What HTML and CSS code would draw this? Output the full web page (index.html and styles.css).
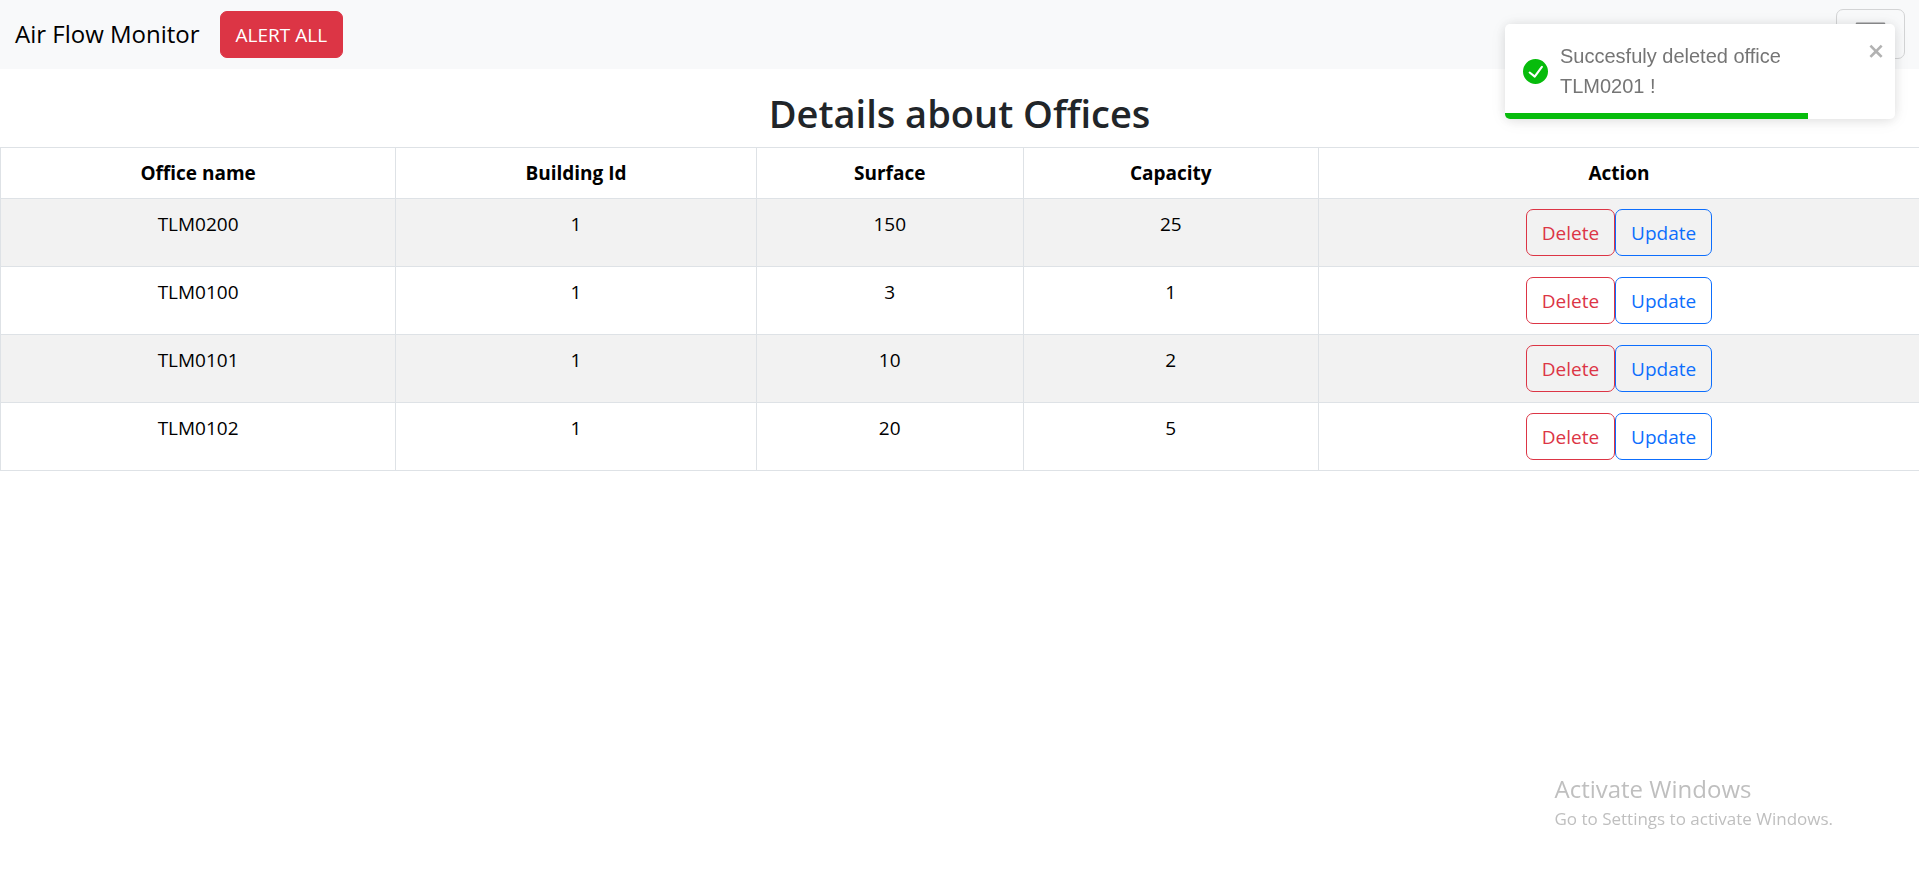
FILE: index.html
```html
<!DOCTYPE html>
<html lang="en">
<head>
<meta charset="utf-8">
<meta name="viewport" content="width=device-width, initial-scale=1">
<title>Air Flow Monitor</title>
<link rel="stylesheet" href="styles.css">
</head>
<body>
<nav class="navbar">
  <a class="brand" href="#">Air Flow Monitor</a>
  <button class="btn btn-danger" type="button">ALERT ALL</button>
  <button class="toggler" type="button" aria-label="Toggle navigation">
    <svg class="toggler-icon" viewBox="0 0 30 30" aria-hidden="true"><path d="M4 7h22M4 15h22M4 23h22"/></svg>
  </button>
</nav>
<main>
  <h2 class="title">Details about Offices</h2>
  <table class="table">
    <colgroup>
      <col class="col-name"><col class="col-building"><col class="col-surface"><col class="col-capacity"><col>
    </colgroup>
    <thead>
      <tr><th>Office name</th><th>Building Id</th><th>Surface</th><th>Capacity</th><th>Action</th></tr>
    </thead>
    <tbody>
      <tr><td>TLM0200</td><td>1</td><td>150</td><td>25</td><td><div class="actions"><button class="btn btn-outline-danger" type="button">Delete</button><button class="btn btn-outline-primary" type="button">Update</button></div></td></tr>
      <tr><td>TLM0100</td><td>1</td><td>3</td><td>1</td><td><div class="actions"><button class="btn btn-outline-danger" type="button">Delete</button><button class="btn btn-outline-primary" type="button">Update</button></div></td></tr>
      <tr><td>TLM0101</td><td>1</td><td>10</td><td>2</td><td><div class="actions"><button class="btn btn-outline-danger" type="button">Delete</button><button class="btn btn-outline-primary" type="button">Update</button></div></td></tr>
      <tr><td>TLM0102</td><td>1</td><td>20</td><td>5</td><td><div class="actions"><button class="btn btn-outline-danger" type="button">Delete</button><button class="btn btn-outline-primary" type="button">Update</button></div></td></tr>
    </tbody>
  </table>
</main>
<div class="toast" role="alert">
  <div class="toast-body">
    <svg class="toast-icon" viewBox="0 0 24 24" aria-hidden="true"><path d="M12 0a12 12 0 1012 12A12.014 12.014 0 0012 0zm6.927 8.2l-6.845 9.289a1.011 1.011 0 01-1.43.188l-4.888-3.908a1 1 0 111.25-1.562l4.076 3.261 6.227-8.451a1 1 0 111.61 1.183z"/></svg>
    <p class="toast-text">Succesfuly deleted office TLM0201 !</p>
  </div>
  <button class="toast-close" type="button" aria-label="close">
    <svg viewBox="0 0 14 16" aria-hidden="true"><path fill-rule="evenodd" d="M7.71 8.23l3.75 3.75-1.48 1.48-3.75-3.75-3.75 3.75L1 11.98l3.75-3.75L1 4.48 2.48 3l3.75 3.75L9.98 3l1.48 1.48-3.75 3.75z"/></svg>
  </button>
  <div class="toast-progress"></div>
</div>
<aside class="watermark">
  <p class="watermark-title">Activate Windows</p>
  <p class="watermark-text">Go to Settings to activate Windows.</p>
</aside>
</body>
</html>
```
FILE: styles.css
```css
* {
  box-sizing: border-box;
}

body {
  margin: 0;
  background: #fff;
  color: #212529;
  font-family: "Segoe UI", "Open Sans", "Noto Sans", sans-serif;
  font-size: 19px;
  line-height: 30px;
}

p {
  margin: 0;
}

.navbar {
  display: flex;
  align-items: center;
  padding: 9px 14px 10px 15px;
  background: #f8f9fa;
}

.brand {
  margin-right: 20px;
  color: #000;
  font-size: 24px;
  text-decoration: none;
}

.btn {
  padding: 8px 15px 7px;
  border: 1px solid transparent;
  border-radius: 7px;
  background: transparent;
  font: inherit;
}

.btn-danger {
  border-color: #dc3545;
  background: #dc3545;
  color: #fff;
}

.btn-outline-danger {
  border-color: #dc3545;
  color: #dc3545;
}

.btn-outline-primary {
  border-color: #0d6efd;
  color: #0d6efd;
}

.toggler {
  display: flex;
  margin-left: auto;
  padding: 5px 15px 6px;
  border: 1px solid #d3d4d5;
  border-radius: 7px;
  background: transparent;
}

.toggler-icon {
  width: 37px;
  height: 37px;
  fill: none;
  stroke: #8d8e8f;
  stroke-width: 2;
  stroke-linecap: round;
}

.title {
  margin: 20px 0 10px;
  font-size: 38px;
  font-weight: 600;
  line-height: 48px;
  text-align: center;
}

.table {
  width: 100%;
  border-collapse: collapse;
  table-layout: fixed;
  color: #000;
  text-align: center;
}

.table th,
.table td {
  padding: 10px;
  border: 1px solid #dee2e6;
  vertical-align: top;
}

.table th:last-child,
.table td:last-child {
  border-right: 0;
}

.table th {
  font-weight: 700;
}

.table tbody tr:nth-child(odd) {
  background: #f2f2f2;
}

.col-name {
  width: 20.6%;
}

.col-building {
  width: 18.8%;
}

.col-surface {
  width: 13.9%;
}

.col-capacity {
  width: 15.4%;
}

.actions {
  display: flex;
  justify-content: center;
}

.toast {
  position: fixed;
  top: 24px;
  right: 24px;
  display: flex;
  align-items: flex-start;
  width: 390px;
  padding: 17px 9px 18px 18px;
  border-radius: 5px;
  overflow: hidden;
  background: #fff;
  box-shadow: 0 1px 12px rgba(0, 0, 0, 0.1), 0 2px 18px rgba(0, 0, 0, 0.06);
  color: #757575;
  font-family: Arial, "Liberation Sans", sans-serif;
  font-size: 20px;
}

.toast-body {
  display: flex;
  flex: 1;
  align-items: center;
  gap: 12px;
}

.toast-icon {
  flex: none;
  width: 25px;
  height: 25px;
  fill: #07bc0c;
}

.toast-text {
  max-width: 260px;
}

.toast-close {
  display: flex;
  padding: 0;
  border: 0;
  background: transparent;
}

.toast-close svg {
  width: 18px;
  height: 20px;
  fill: #b2b2b2;
}

.toast-progress {
  position: absolute;
  bottom: 0;
  left: 0;
  width: 303px;
  height: 6px;
  background: #07bc0c;
}

.watermark {
  position: fixed;
  right: 86px;
  bottom: 43px;
  color: #bfbfbf;
}

.watermark-title {
  font-size: 24px;
}

.watermark-text {
  font-size: 17px;
}
```
